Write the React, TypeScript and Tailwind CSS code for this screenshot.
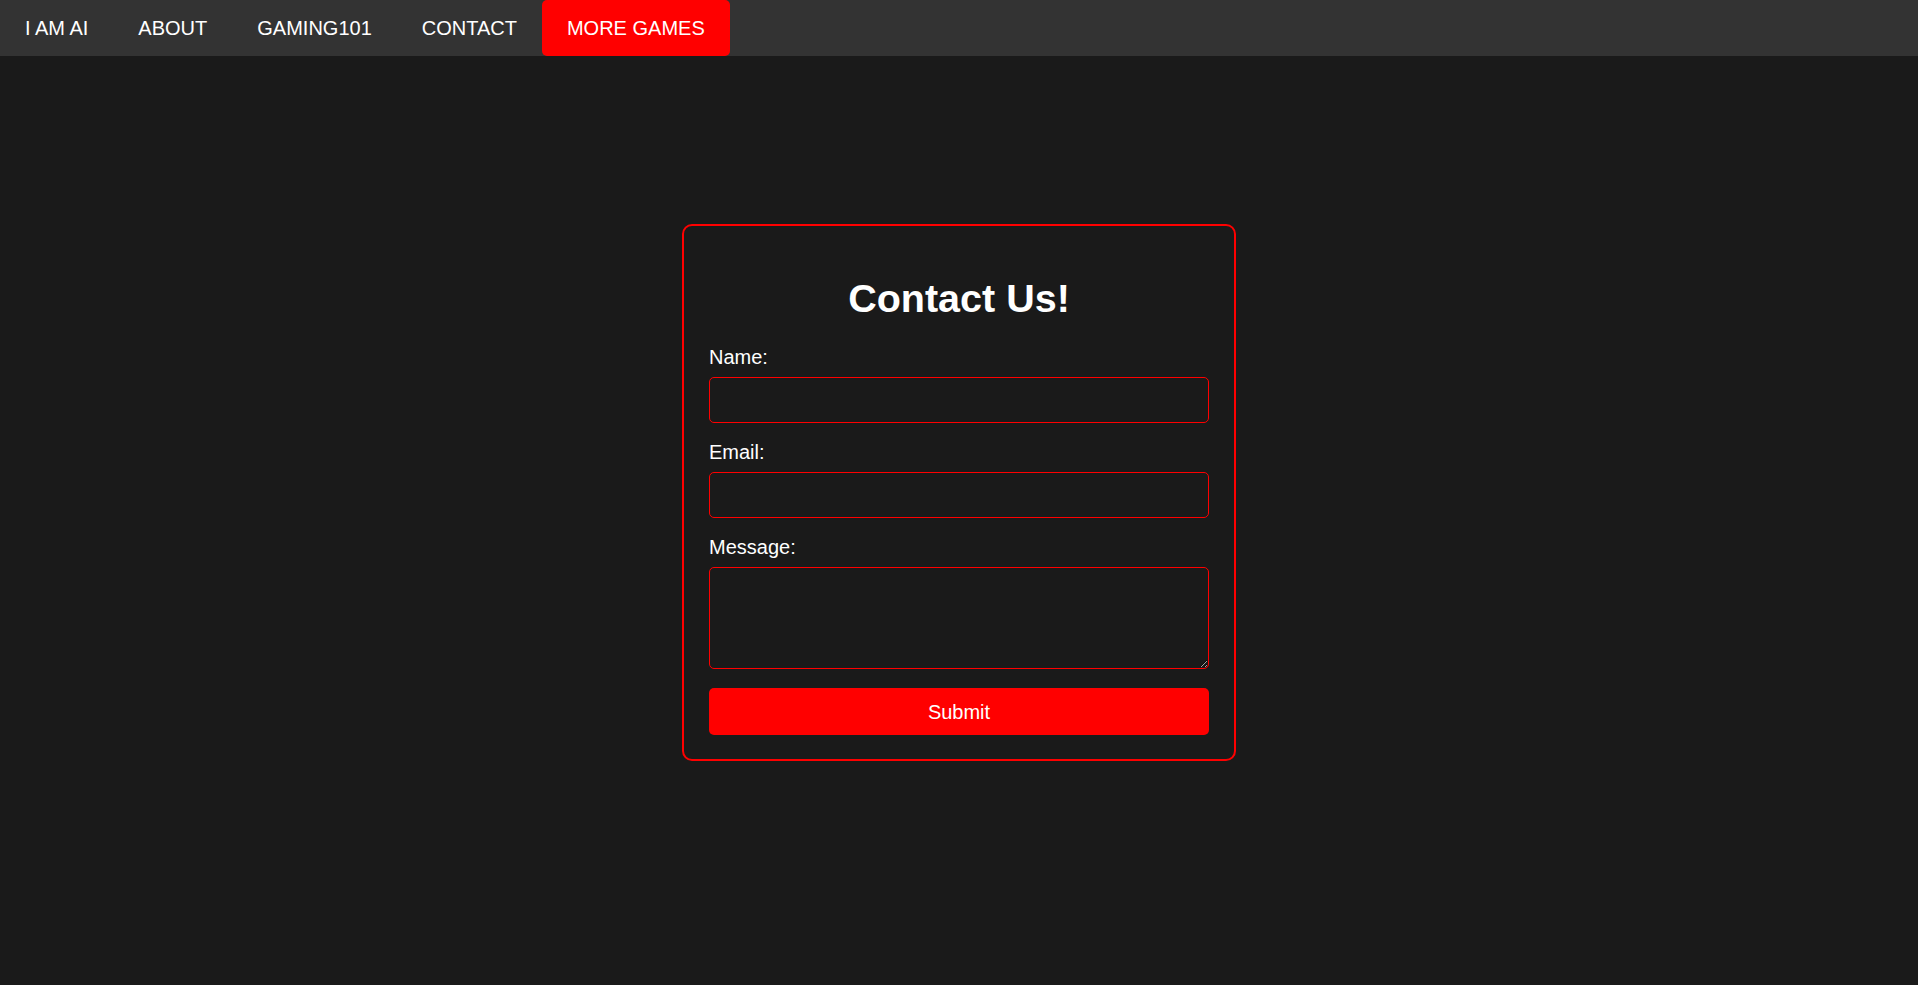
const navItems = ["I AM AI", "ABOUT", "GAMING101", "CONTACT"];

function NavBar() {
  return (
    <nav className="fixed top-0 left-0 right-0 h-[56px] bg-[#333333] flex">
      {navItems.map((item) => (
        <a
          key={item}
          href="#"
          className="h-full flex items-center px-[25px] text-[20px] text-white"
        >
          {item}
        </a>
      ))}
      <a
        href="#"
        className="h-full flex items-center px-[25px] text-[20px] text-white bg-[#ff0000] rounded-[5px]"
      >
        MORE GAMES
      </a>
    </nav>
  );
}

function Field({ label, multiline }: { label: string; multiline?: boolean }) {
  return (
    <div className="flex flex-col">
      <label className="text-[20px] leading-[23px] text-white mb-[8px]">{label}</label>
      {multiline ? (
        <textarea className="h-[102px] w-full border border-[#ff0000] rounded-[5px] bg-[#1a1a1a] text-white px-[10px] py-[8px] text-[18px] outline-none [color-scheme:dark]" />
      ) : (
        <input
          type="text"
          className="h-[46px] w-full border border-[#ff0000] rounded-[5px] bg-[#1a1a1a] text-white px-[10px] text-[18px] outline-none"
        />
      )}
    </div>
  );
}

export default function App() {
  return (
    <div
      className="min-h-screen bg-[#1a1a1a] flex items-center justify-center"
      style={{ fontFamily: '"Liberation Sans", Arial, sans-serif' }}
    >
      <NavBar />
      <form
        className="w-[554px] border-2 border-[#ff0000] rounded-[10px] px-[25px] pt-[24px] pb-[24px] flex flex-col"
        onSubmit={(e) => e.preventDefault()}
      >
        <h1 className="text-[39.5px] leading-[46px] font-bold text-white text-center mt-[25px] mb-[25px]">
          Contact Us!
        </h1>
        <div className="flex flex-col gap-[18px]">
          <Field label="Name:" />
          <Field label="Email:" />
          <Field label="Message:" multiline />
        </div>
        <button
          type="submit"
          className="mt-[19px] h-[47px] w-full bg-[#ff0000] rounded-[5px] text-white text-[20px]"
        >
          Submit
        </button>
      </form>
    </div>
  );
}
